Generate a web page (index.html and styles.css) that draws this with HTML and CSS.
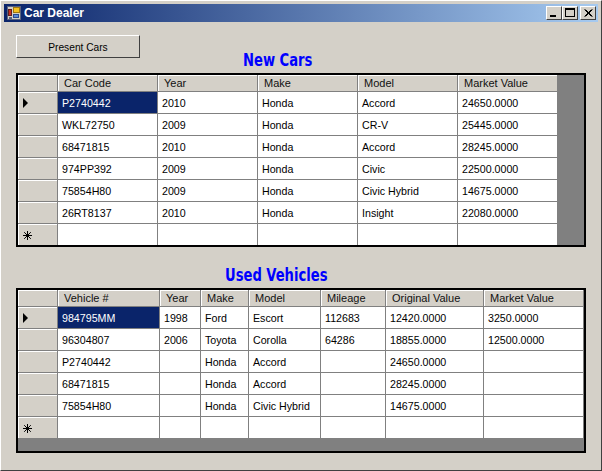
FILE: index.html
```html
<!DOCTYPE html>
<html lang="en">
<head>
    <meta charset="UTF-8">
    <title>Car Dealer</title>
    <link rel="stylesheet" href="styles.css">
</head>
<body>
    <div class="window">
        <div class="titlebar">
            <svg class="app-icon" width="14" height="14" viewBox="0 0 14 14">
                <rect x="0.5" y="0.5" width="13" height="13" fill="#d4d0c8" stroke="#59627f"/>
                <rect x="6.5" y="1.5" width="6" height="5" fill="#f4c020" stroke="#a07810"/>
                <rect x="1.5" y="3.5" width="3" height="6" fill="#c83020" stroke="#602020"/>
                <rect x="6.5" y="8.5" width="5" height="3" fill="#5a8ad8" stroke="#2a4a90"/>
                <rect x="2" y="11" width="3" height="2" fill="#59627f"/>
            </svg>
            <span class="title-text">Car Dealer</span>
            <div class="win-buttons">
                <div class="win-btn">
                    <svg width="14" height="12" viewBox="0 0 14 12"><rect x="3" y="8" width="6" height="2" fill="#000"/></svg>
                </div>
                <div class="win-btn">
                    <svg width="14" height="12" viewBox="0 0 14 12"><rect x="2.5" y="1.5" width="9" height="8" fill="none" stroke="#000"/><rect x="2" y="1" width="10" height="2" fill="#000"/></svg>
                </div>
                <div class="win-btn win-close">
                    <svg width="14" height="12" viewBox="0 0 14 12"><path d="M3.5 2.5l7 7M4.5 2.5l7 7M10.5 2.5l-7 7M11.5 2.5l-7 7" stroke="#000" fill="none"/></svg>
                </div>
            </div>
        </div>

        <div class="client">
            <div class="top-row">
                <button class="present-btn">Present Cars</button>
                <h2 class="grid-title new-title">New Cars</h2>
            </div>

            <div class="grid">
                <table class="grid-table new-cars">
                    <colgroup>
                        <col class="c-head"><col class="c-100"><col class="c-100"><col class="c-100"><col class="c-100"><col class="c-100">
                    </colgroup>
                    <tr class="head-row"><th></th><th>Car Code</th><th>Year</th><th>Make</th><th>Model</th><th>Market Value</th></tr>
                    <tr><td class="row-head"><span class="arrow"></span></td><td class="selected">P2740442</td><td>2010</td><td>Honda</td><td>Accord</td><td>24650.0000</td></tr>
                    <tr><td class="row-head"></td><td>WKL72750</td><td>2009</td><td>Honda</td><td>CR-V</td><td>25445.0000</td></tr>
                    <tr><td class="row-head"></td><td>68471815</td><td>2010</td><td>Honda</td><td>Accord</td><td>28245.0000</td></tr>
                    <tr><td class="row-head"></td><td>974PP392</td><td>2009</td><td>Honda</td><td>Civic</td><td>22500.0000</td></tr>
                    <tr><td class="row-head"></td><td>75854H80</td><td>2009</td><td>Honda</td><td>Civic Hybrid</td><td>14675.0000</td></tr>
                    <tr><td class="row-head"></td><td>26RT8137</td><td>2010</td><td>Honda</td><td>Insight</td><td>22080.0000</td></tr>
                    <tr class="last-row"><td class="row-head"><svg class="star" width="9" height="9" viewBox="0 0 9 9"><path d="M4.5 0v9M0 4.5h9M1.2 1.2l6.6 6.6M7.8 1.2l-6.6 6.6" stroke="#000" fill="none"/></svg></td><td></td><td></td><td></td><td></td><td></td></tr>
                </table>
            </div>

            <h2 class="grid-title used-title">Used Vehicles</h2>

            <div class="grid grid-used">
                <table class="grid-table used-cars">
                    <colgroup>
                        <col class="c-head"><col class="c-vin"><col class="c-year"><col class="c-make"><col class="c-model"><col class="c-miles"><col class="c-orig"><col class="c-100">
                    </colgroup>
                    <tr class="head-row"><th></th><th>Vehicle #</th><th>Year</th><th>Make</th><th>Model</th><th>Mileage</th><th>Original Value</th><th>Market Value</th></tr>
                    <tr><td class="row-head"><span class="arrow"></span></td><td class="selected">984795MM</td><td>1998</td><td>Ford</td><td>Escort</td><td>112683</td><td>12420.0000</td><td>3250.0000</td></tr>
                    <tr><td class="row-head"></td><td>96304807</td><td>2006</td><td>Toyota</td><td>Corolla</td><td>64286</td><td>18855.0000</td><td>12500.0000</td></tr>
                    <tr><td class="row-head"></td><td>P2740442</td><td></td><td>Honda</td><td>Accord</td><td></td><td>24650.0000</td><td></td></tr>
                    <tr><td class="row-head"></td><td>68471815</td><td></td><td>Honda</td><td>Accord</td><td></td><td>28245.0000</td><td></td></tr>
                    <tr><td class="row-head"></td><td>75854H80</td><td></td><td>Honda</td><td>Civic Hybrid</td><td></td><td>14675.0000</td><td></td></tr>
                    <tr class="last-row"><td class="row-head"><svg class="star" width="9" height="9" viewBox="0 0 9 9"><path d="M4.5 0v9M0 4.5h9M1.2 1.2l6.6 6.6M7.8 1.2l-6.6 6.6" stroke="#000" fill="none"/></svg></td><td></td><td></td><td></td><td></td><td></td><td></td><td></td></tr>
                </table>
            </div>
        </div>
    </div>
</body>
</html>
```

FILE: styles.css
```css
* {
    margin: 0;
    padding: 0;
    box-sizing: border-box;
}

body {
    font-family: "Liberation Sans", Arial, sans-serif;
    font-size: 10.67px;
    color: #000;
    background-color: #d4d0c8;
}

.window {
    width: 602px;
    height: 471px;
    background-color: #d4d0c8;
    padding: 4px;
    border: 1px solid;
    border-color: #fff #404040 #404040 #fff;
}

.titlebar {
    display: flex;
    align-items: center;
    height: 18px;
    margin: -1px -1px 0 -1px;
    padding: 0 2px 0 3px;
    background: linear-gradient(to right, #0a246a, #a6caf0);
    color: #fff;
    font-weight: bold;
}

.app-icon {
    margin-right: 3px;
}

.title-text {
    font-size: 12px;
}

.win-buttons {
    display: flex;
    margin-left: auto;
}

.win-btn {
    width: 16px;
    height: 14px;
    background-color: #d4d0c8;
    border: 1px solid;
    border-color: #fff #404040 #404040 #fff;
    display: flex;
    align-items: center;
    justify-content: center;
}

.win-close {
    margin-left: 2px;
}

.client {
    padding: 0 11px;
}

.top-row {
    display: flex;
    align-items: flex-start;
    height: 51px;
    padding-top: 13px;
}

.present-btn {
    display: block;
    width: 124px;
    height: 23px;
    padding-top: 1px;
    font-family: "Liberation Sans", Arial, sans-serif;
    font-size: 10.2px;
    color: #000;
    background-color: #d4d0c8;
    border: 1px solid;
    border-color: #fff #404040 #404040 #fff;
}

.grid-title {
    font-family: "DejaVu Sans", sans-serif;
    font-size: 14.6px;
    font-stretch: condensed;
    font-weight: bold;
    line-height: 20px;
    color: #0000ff;
    transform: scaleY(1.2);
}

.new-title {
    margin-left: 103px;
    margin-top: 15px;
}

.used-title {
    height: 41px;
    padding-top: 17px;
    padding-left: 209px;
}

.grid {
    width: 570px;
    height: 174px;
    background-color: #808080;
    border: 2px solid #000;
    overflow: hidden;
}

.grid-used {
    height: 165px;
}

.grid-table {
    border-collapse: separate;
    border-spacing: 0;
    table-layout: fixed;
}

.new-cars {
    width: 540px;
}

.used-cars {
    width: 566px;
}

.c-head { width: 40px; }
.c-100 { width: 100px; }
.c-vin { width: 102px; }
.c-year { width: 41px; }
.c-make { width: 48px; }
.c-model { width: 72px; }
.c-miles { width: 65px; }
.c-orig { width: 98px; }

.grid-table th {
    height: 17px;
    font-size: 11px;
    font-weight: normal;
    text-align: left;
    color: #111;
    background-color: #d4d0c8;
    padding-left: 6px;
    border-right: 1px solid #808080;
    border-bottom: 1px solid #808080;
    box-shadow: inset 1px 1px 0 #fff;
    white-space: nowrap;
}

.grid-table td {
    height: 22px;
    padding-left: 4px;
    background-color: #fff;
    border-right: 1px solid #808080;
    border-bottom: 1px solid #808080;
    white-space: nowrap;
    overflow: hidden;
}

.grid-table .last-row td {
    height: 21px;
    border-bottom: none;
}

.grid-table td.row-head {
    position: relative;
    background-color: #d4d0c8;
    box-shadow: inset 1px 1px 0 #fff;
}

.grid-table td.selected {
    background-color: #0a246a;
    color: #fff;
}

.arrow {
    position: absolute;
    left: 5px;
    top: 6px;
    border-left: 5px solid #000;
    border-top: 5px solid transparent;
    border-bottom: 5px solid transparent;
}

.star {
    position: absolute;
    left: 5px;
    top: 7px;
}
```
